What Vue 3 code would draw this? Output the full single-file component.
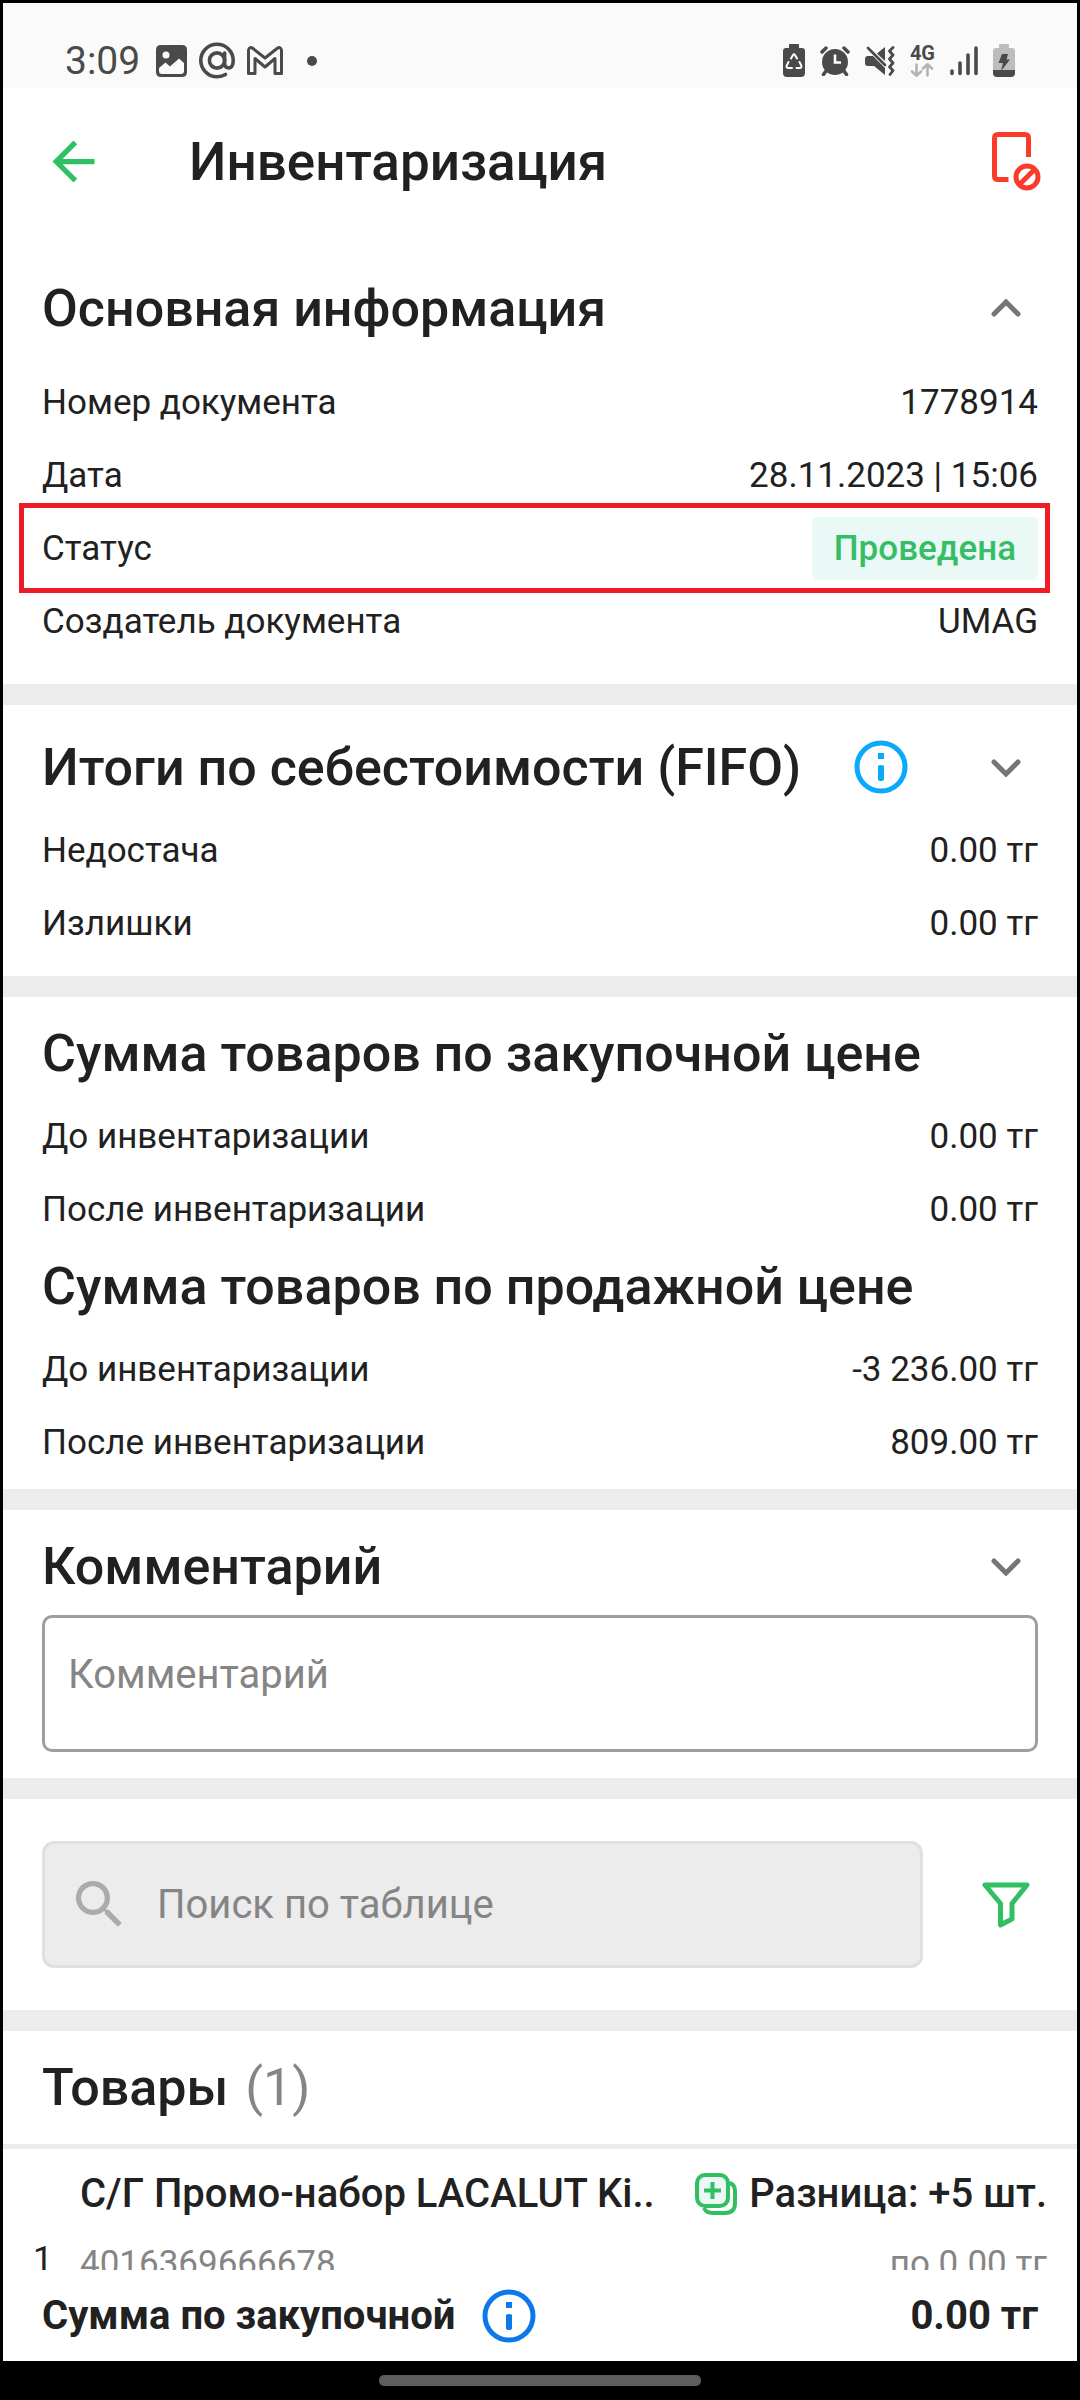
<script setup>
import { ref } from 'vue'

const comment = ref('')
const query = ref('')

const mainInfo = [
  { label: 'Номер документа', value: '1778914' },
  { label: 'Дата', value: '28.11.2023 | 15:06' },
  { label: 'Статус', value: 'Проведена', status: true },
  { label: 'Создатель документа', value: 'UMAG' },
]
const totals = [
  { label: 'Недостача', value: '0.00 тг' },
  { label: 'Излишки', value: '0.00 тг' },
]
const purchase = [
  { label: 'До инвентаризации', value: '0.00 тг' },
  { label: 'После инвентаризации', value: '0.00 тг' },
]
const sale = [
  { label: 'До инвентаризации', value: '-3 236.00 тг' },
  { label: 'После инвентаризации', value: '809.00 тг' },
]
const products = [
  { name: 'С/Г Промо-набор LACALUT Ki..', code: '4016369666678', diff: 'Разница: +5 шт.', price: 'по 0.00 тг' },
]
</script>

<template>
  <div class="phone">
    <div class="status-bar">
      <div class="status-left">
        <span class="clock">3:09</span>
        <svg width="31" height="32" viewBox="0 0 31 32">
          <path fill="#4a4a4a" fill-rule="evenodd" d="M5 0H26Q31 0 31 5V27Q31 32 26 32H5Q0 32 0 27V5Q0 0 5 0ZM10 6.500A3.500 3.500 0 1 0 10 13.500A3.500 3.500 0 1 0 10 6.500ZM3 23L9.500 17.500L14 21.500L23 13.500L28 18V26Q28 29 25 29H6Q3 29 3 26Z" />
        </svg>
        <svg class="at" width="36" height="37" viewBox="0 0 36 37" fill="none" stroke="#4a4a4a" stroke-width="3.600" stroke-linecap="round">
          <circle cx="18" cy="18.500" r="7.600" />
          <path d="M25.600 11V21Q25.600 26 30 26Q34.200 25.500 34.200 18.500A16.200 16.200 0 1 0 18 34.700Q23 34.700 26.500 32.500" />
        </svg>
        <svg width="36" height="29" viewBox="0 0 36 29" fill="none" stroke="#4a4a4a" stroke-width="3" stroke-linejoin="round">
          <path d="M1.500 27.500V4Q2.500 0 6 2.500L18 12L30 2.500Q33.500 0 34.500 4V27.500H28V12.500L18 21L8 12.500V27.500Z" />
        </svg>
        <svg class="dot" width="10" height="10" viewBox="0 0 10 10"><circle cx="5" cy="5" r="5" fill="#4a4a4a" /></svg>
      </div>
      <div class="status-right">
        <svg width="22" height="33" viewBox="0 0 22 33">
          <path fill="#4a4a4a" d="M6 1Q6 0 7 0H15Q16 0 16 1V4H19Q22 4 22 7V29Q22 33 18 33H4Q0 33 0 29V7Q0 4 3 4H6Z" />
          <g fill="none" stroke="#fff" stroke-width="2" stroke-linecap="round">
            <path d="M8 14.500L10 11Q11 9.700 12 11L14 14.500M16.500 18L18.300 21.500Q19 24 16.500 24H13.500M9 24H5.500Q3 24 3.700 21.500L5.500 18" />
          </g>
        </svg>
        <svg width="30" height="30" viewBox="0 0 30 30" stroke="#4a4a4a" fill="none">
          <circle cx="15" cy="16" r="13" fill="#4a4a4a" stroke="none" />
          <path d="M2 6L6 2M28 6L24 2M6 25L3.500 28.500M24 25L26.500 28.500" stroke-width="3.500" stroke-linecap="round" />
          <path d="M15 8.500V16.500H21" stroke="#fff" stroke-width="2.600" />
        </svg>
        <svg width="30" height="30" viewBox="0 0 30 30">
          <path fill="#4a4a4a" d="M0 13Q0 10 3 10H8L20 22V29L9 20H3Q0 20 0 17ZM20 1V15L12 7.500Z" />
          <path d="M3 2L20 19" stroke="#4a4a4a" stroke-width="2.600" stroke-linecap="round" />
          <path d="M28 1.500L24.500 5L28 9L24.500 13L28 17L24.500 21L28 24.500L25 28.500" fill="none" stroke="#4a4a4a" stroke-width="2.800" stroke-linecap="round" stroke-linejoin="round" />
        </svg>
        <span class="network">
          <span>4G</span>
          <svg width="24" height="14" viewBox="0 0 24 14" fill="none" stroke="#b3b3b3" stroke-width="2.600" stroke-linecap="round">
            <path d="M6.500 1.500V12.500M2 8.500L6.500 12.700L11 8.500M17.500 12.500V1.500M13 5.500L17.500 1.300L22 5.500" />
          </svg>
        </span>
        <svg width="28" height="30" viewBox="0 0 28 30" stroke="#4a4a4a" stroke-width="3.600" stroke-linecap="round">
          <path d="M2 25V27.500M10 17V27.500M18 9V27.500M26 2V27.500" />
        </svg>
        <svg width="22" height="33" viewBox="0 0 22 33">
          <path fill="#bdbdbd" d="M6 1Q6 0 7 0H15Q16 0 16 1V4H19Q22 4 22 7V26H0V7Q0 4 3 4H6Z" />
          <path fill="#4a4a4a" d="M0 26H22V29Q22 33 18 33H4Q0 33 0 29Z" />
          <path fill="#4a4a4a" d="M9 10H15L13.500 15.500H17L8 27L10 19H5.500Z" />
        </svg>
      </div>
    </div>

    <header class="app-bar">
      <button class="icon-btn back" type="button" aria-label="Назад">
        <svg width="63" height="63" viewBox="0 0 24 24"><path fill="#30bf62" d="M20 11H7.830l5.590-5.590L12 4l-8 8 8 8 1.410-1.410L7.830 13H20v-2z" /></svg>
      </button>
      <h1>Инвентаризация</h1>
      <button class="icon-btn" type="button" aria-label="Отменить документ">
        <svg width="50" height="62" viewBox="0 0 50 62" fill="none" stroke="#fb3b2a" stroke-width="5">
          <path d="M36.500 26V7Q36.500 3.500 33 3.500H6Q2.500 3.500 2.500 7V45Q2.500 48.500 6 48.500H16.500" />
          <circle cx="35" cy="46" r="11" />
          <path d="M28 53L42 39" />
        </svg>
      </button>
    </header>

    <main class="content">
      <section class="block info-block">
        <div class="block-head">
          <h2>Основная информация</h2>
          <button class="icon-btn" type="button" aria-label="Свернуть">
            <svg width="32" height="20" viewBox="0 0 32 20"><path class="chevron" d="M4 16L16 4L28 16" /></svg>
          </button>
        </div>
        <dl>
          <div v-for="row in mainInfo" :key="row.label" class="row" :class="{ marked: row.status }">
            <dt>{{ row.label }}</dt>
            <dd :class="{ chip: row.status }">{{ row.value }}</dd>
          </div>
        </dl>
      </section>

      <section class="block totals-block">
        <div class="block-head">
          <h2>Итоги по себестоимости (FIFO)</h2>
          <button class="icon-btn info" type="button" aria-label="Справка">
            <svg width="54" height="54" viewBox="0 0 54 54">
              <circle cx="27" cy="27" r="24" fill="none" stroke="#0aa9fc" stroke-width="5" />
              <path d="M24 13H30V19H24ZM24 26.500Q24 25 27 25Q30 25 30 26.500V39Q30 41 27 41Q24 41 24 39Z" fill="#0aa9fc" />
            </svg>
          </button>
          <button class="icon-btn" type="button" aria-label="Развернуть">
            <svg width="32" height="20" viewBox="0 0 32 20"><path class="chevron" d="M4 5L16 17L28 5" /></svg>
          </button>
        </div>
        <dl>
          <div v-for="row in totals" :key="row.label" class="row">
            <dt>{{ row.label }}</dt>
            <dd>{{ row.value }}</dd>
          </div>
        </dl>
      </section>

      <section class="block sums-block">
        <div class="block-head"><h2>Сумма товаров по закупочной цене</h2></div>
        <dl>
          <div v-for="row in purchase" :key="row.label" class="row">
            <dt>{{ row.label }}</dt>
            <dd>{{ row.value }}</dd>
          </div>
        </dl>
        <div class="block-head"><h2>Сумма товаров по продажной цене</h2></div>
        <dl>
          <div v-for="row in sale" :key="row.label" class="row">
            <dt>{{ row.label }}</dt>
            <dd>{{ row.value }}</dd>
          </div>
        </dl>
      </section>

      <section class="block comment-block">
        <div class="block-head">
          <h2><label for="comment">Комментарий</label></h2>
          <button class="icon-btn" type="button" aria-label="Развернуть">
            <svg width="32" height="20" viewBox="0 0 32 20"><path class="chevron" d="M4 5L16 17L28 5" /></svg>
          </button>
        </div>
        <textarea id="comment" v-model="comment" placeholder="Комментарий"></textarea>
      </section>

      <section class="block search-block">
        <label class="search">
          <svg width="63" height="63" viewBox="0 0 24 24"><path fill="#ababab" d="M15.500 14h-.790l-.280-.270A6.471 6.471 0 0 0 16 9.500 6.500 6.500 0 1 0 9.500 16c1.610 0 3.090-.590 4.230-1.570l.270.280v.790l5 4.990L20.490 19l-4.990-5zm-6 0C7.010 14 5 11.990 5 9.500S7.010 5 9.500 5 14 7.010 14 9.500 11.990 14 9.500 14z" /></svg>
          <input v-model="query" type="text" placeholder="Поиск по таблице" aria-label="Поиск по таблице">
        </label>
        <button class="icon-btn" type="button" aria-label="Фильтр">
          <svg width="48" height="46" viewBox="0 0 48 46" fill="none" stroke="#30bf62" stroke-width="5" stroke-linejoin="round">
            <path d="M3 3H45L30 21.500V37L18.500 43V21.500Z" />
          </svg>
        </button>
      </section>

      <section class="products">
        <h2>Товары <span class="count">(1)</span></h2>
        <ol>
          <li v-for="(item, i) in products" :key="item.code">
            <span class="index">{{ i + 1 }}</span>
            <div class="details">
              <div class="line title">
                <span>{{ item.name }}</span>
                <span class="diff">
                  <svg width="42" height="42" viewBox="0 0 42 42" fill="none" stroke="#30bf62" stroke-width="4">
                    <path d="M34 10Q40 11 40 18V30Q40 40 30 40H18Q11 40 9 35" />
                    <rect x="2" y="2" width="31" height="31" rx="8" fill="#eaf9f6" />
                    <path d="M17.500 9V26M9 17.500H26" />
                  </svg>
                  {{ item.diff }}
                </span>
              </div>
              <div class="line meta">
                <span>{{ item.code }}</span>
                <span>{{ item.price }}</span>
              </div>
            </div>
          </li>
        </ol>
      </section>
    </main>

    <footer class="summary">
      <span>Сумма по закупочной</span>
      <button class="icon-btn" type="button" aria-label="Справка">
        <svg width="54" height="54" viewBox="0 0 54 54">
          <circle cx="27" cy="27" r="24" fill="none" stroke="#0d78ea" stroke-width="5" />
          <path d="M24 13H30V19H24ZM24 26.500Q24 25 27 25Q30 25 30 26.500V39Q30 41 27 41Q24 41 24 39Z" fill="#0d78ea" />
        </svg>
      </button>
      <span class="sum">0.00 тг</span>
    </footer>
    <div class="nav-bar"><span class="handle"></span></div>
  </div>
</template>

<style>
body {
  margin: 0;
  background: #fff;
}
</style>

<style scoped>
.phone {
  box-sizing: border-box;
  display: flex;
  flex-direction: column;
  height: 100vh;
  border: 3px solid #000;
  border-bottom: 0;
  background: #fff;
  color: #212121;
  font-family: Roboto, "Noto Sans", sans-serif;
  font-size: 35px;
}
.phone * {
  box-sizing: border-box;
}
svg {
  display: block;
  flex: none;
}
h1, h2, dl, dd, ol {
  margin: 0;
  padding: 0;
}
h1, h2 {
  font-size: 52px;
  font-weight: 500;
  white-space: nowrap;
}
.icon-btn {
  display: flex;
  padding: 0;
  border: 0;
  background: none;
}
.status-bar {
  flex: none;
  display: flex;
  align-items: center;
  justify-content: space-between;
  height: 85px;
  padding: 30px 62px 0;
  background: #fafafa;
  color: #4a4a4a;
}
.status-left,
.status-right {
  display: flex;
  align-items: center;
}
.status-left {
  gap: 12px;
}
.status-right {
  gap: 15px;
}
.clock {
  margin-right: 4px;
  font-size: 39px;
}
.dot {
  margin-left: 12px;
}
.network {
  display: flex;
  flex-direction: column;
  align-items: center;
  gap: 2px;
  font-size: 20px;
  font-weight: 700;
  line-height: 16px;
}
.app-bar {
  flex: none;
  display: flex;
  align-items: center;
  height: 147px;
  padding: 0 35px 0 39px;
}
.app-bar h1 {
  flex: 1;
  margin-left: 84px;
  font-size: 53px;
}
.content {
  flex: 1;
  min-height: 0;
  overflow-y: auto;
  scrollbar-width: none;
}
.block {
  padding: 14px 39px 0;
  border-bottom: 21px solid #ececec;
}
.block-head {
  display: flex;
  align-items: center;
  height: 84px;
  margin-bottom: 5px;
  padding-right: 16px;
}
.block-head h2 {
  flex: 1;
}
.chevron {
  fill: none;
  stroke: #757575;
  stroke-width: 5;
  stroke-linecap: round;
}
.info {
  margin-right: 82px;
}
.row {
  position: relative;
  display: flex;
  align-items: center;
  justify-content: space-between;
  height: 73px;
}
.info-block {
  padding-top: 31px;
  padding-bottom: 26px;
}
.info-block .block-head {
  margin-bottom: 16px;
}
.totals-block {
  padding-top: 20px;
  padding-bottom: 16px;
}
.sums-block {
  padding-bottom: 10px;
}
.sums-block dl + .block-head {
  margin-top: -2px;
}
.chip {
  padding: 0 22px;
  border-radius: 5px;
  background: #eaf9f6;
  color: #36bd66;
  font-weight: 500;
  line-height: 63px;
}
.marked::after {
  content: "";
  position: absolute;
  inset: -9px -12px -8px -23px;
  border: 5px solid #ee1c24;
  pointer-events: none;
}
.comment-block {
  padding-bottom: 26px;
}
.comment-block .block-head {
  margin-bottom: 7px;
}
textarea {
  display: block;
  width: 100%;
  height: 137px;
  padding: 33px 23px;
  border: 3px solid #9e9e9e;
  border-radius: 10px;
  background: #fff;
  color: #212121;
  font: 40px/48px Roboto, "Noto Sans", sans-serif;
  resize: none;
}
textarea::placeholder,
input::placeholder {
  color: #858585;
  opacity: 1;
}
.search-block {
  display: flex;
  align-items: center;
  gap: 59px;
  padding: 42px 47px 42px 39px;
}
.search {
  flex: 1;
  display: flex;
  align-items: center;
  gap: 26px;
  height: 127px;
  padding: 0 23px;
  border: 3px solid #e0e0e0;
  border-radius: 12px;
  background: #ececec;
}
input {
  flex: 1;
  min-width: 0;
  padding: 0;
  border: 0;
  background: none;
  color: #212121;
  font: 40px/48px Roboto, "Noto Sans", sans-serif;
}
.products h2 {
  height: 118px;
  padding: 0 39px;
  border-bottom: 5px solid #ececec;
  line-height: 113px;
}
.count {
  margin-left: 4px;
  color: #858585;
  font-weight: 400;
}
ol {
  list-style: none;
}
li {
  display: flex;
  align-items: center;
  height: 220px;
  padding: 0 30px;
}
.index {
  width: 47px;
}
.details {
  flex: 1;
  align-self: flex-start;
  padding-top: 10px;
}
.line {
  display: flex;
  justify-content: space-between;
  line-height: 70px;
  white-space: nowrap;
}
.title {
  font-size: 40px;
  font-weight: 500;
}
.diff {
  display: flex;
  align-items: center;
  gap: 12px;
}
.meta {
  color: #858585;
}
.summary {
  flex: none;
  display: flex;
  align-items: center;
  gap: 27px;
  height: 91px;
  padding: 0 39px;
  background: #fff;
  font-size: 40px;
  font-weight: 700;
}
.sum {
  margin-left: auto;
}
.nav-bar {
  flex: none;
  display: flex;
  align-items: center;
  justify-content: center;
  height: 39px;
  background: #000;
}
.handle {
  width: 30%;
  height: 11px;
  border-radius: 5px;
  background: #5e5e5e;
}
</style>
